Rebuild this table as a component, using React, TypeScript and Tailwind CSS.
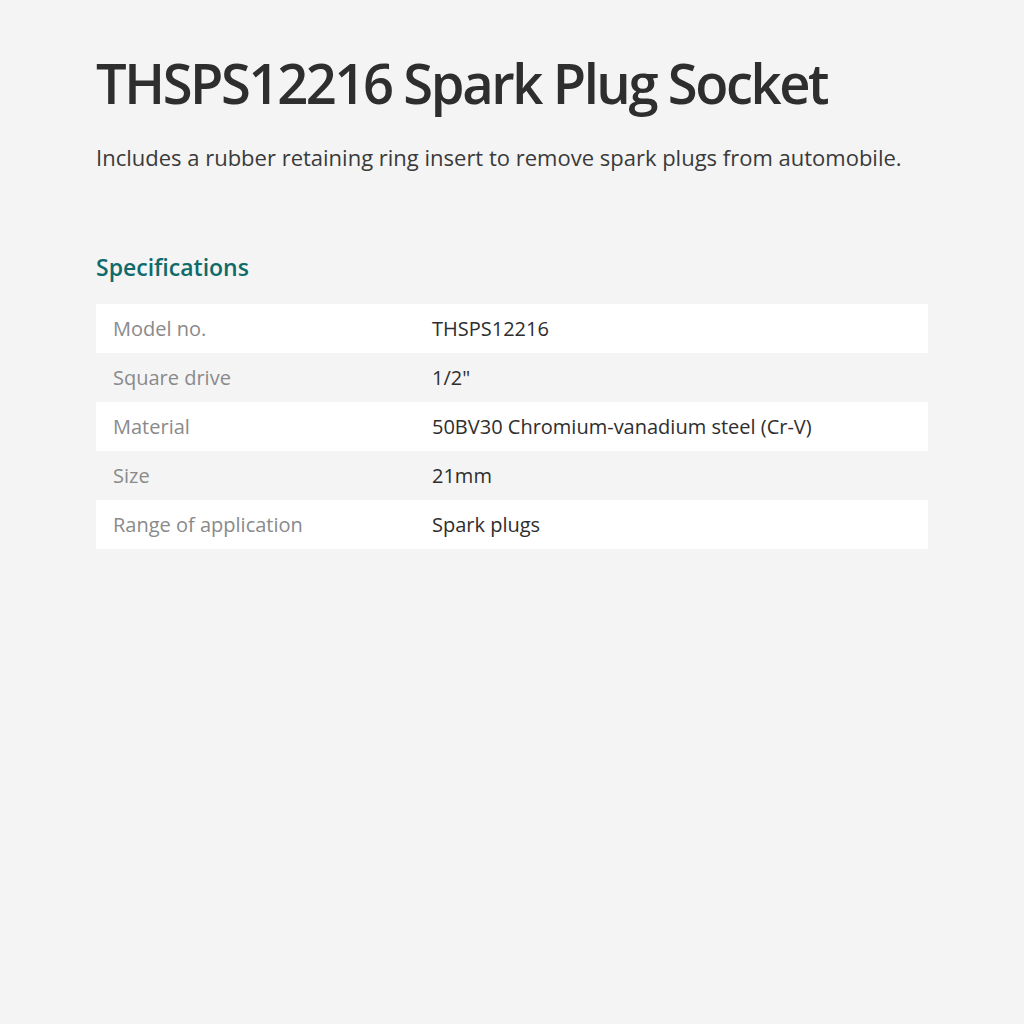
import React from "react";

const rows: [string, string][] = [
  ["Model no.", "THSPS12216"],
  ["Square drive", '1/2"'],
  ["Material", "50BV30 Chromium-vanadium steel (Cr-V)"],
  ["Size", "21mm"],
  ["Range of application", "Spark plugs"],
];

export default function App() {
  return (
    <div className="min-h-[1024px] w-full bg-[#f4f4f4] font-['Open_Sans',sans-serif]">
      <div className="px-[96px] pt-[50px]">
        <h1 className="origin-left scale-x-[0.97] text-[56px] leading-[64px] font-semibold text-[#2e2e2e] tracking-[-2.5px]">
          THSPS12216 Spark Plug Socket
        </h1>
        <p className="mt-[27px] text-[22px] leading-[32px] text-[#3a3a3a]">
          Includes a rubber retaining ring insert to remove spark plugs from automobile.
        </p>
        <h2 className="mt-[78px] text-[23px] leading-[32px] font-semibold text-[#0f6b6b]">
          Specifications
        </h2>
        <div className="mt-[21px] w-[832px]">
          {rows.map(([k, v], i) => (
            <div
              key={k}
              className={`flex h-[49px] items-center text-[20px] ${i % 2 === 0 ? "bg-white" : ""}`}
            >
              <div className="w-[336px] pl-[17px] text-[#8a8a8a]">{k}</div>
              <div className="text-[#2e2e2e]">{v}</div>
            </div>
          ))}
        </div>
      </div>
    </div>
  );
}
